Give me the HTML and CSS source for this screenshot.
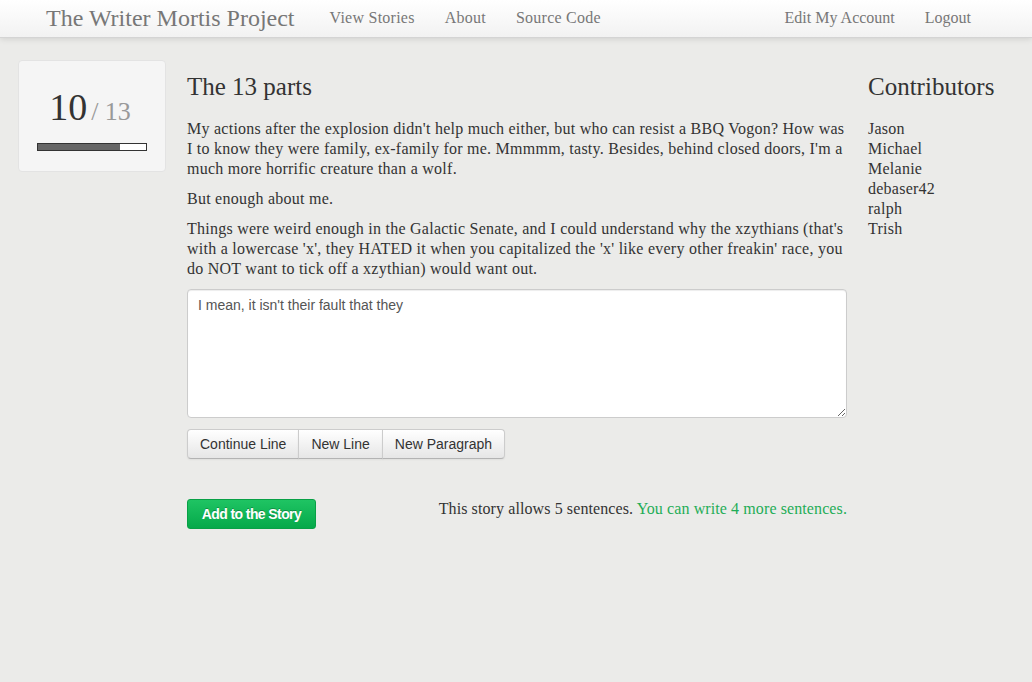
FILE: index.html
```html
<!DOCTYPE html>
<html>
<head>
<meta charset="utf-8">
<title>The Writer Mortis Project</title>
<link rel="stylesheet" href="styles.css">
</head>
<body>
<header class="navbar">
  <div class="nav-inner">
    <a class="brand" href="#">The Writer Mortis Project</a>
    <nav class="nav">
      <a href="#">View Stories</a>
      <a href="#">About</a>
      <a href="#">Source Code</a>
    </nav>
    <nav class="nav nav-right">
      <a href="#">Edit My Account</a>
      <a href="#">Logout</a>
    </nav>
  </div>
</header>
<main class="page">
  <aside class="counter">
    <div class="count"><span class="cur">10</span> <span class="total">/ 13</span></div>
    <div class="progress"><div class="bar" style="width:76%"></div></div>
  </aside>
  <section class="story">
    <h2>The 13 parts</h2>
    <p>My actions after the explosion didn't help much either, but who can resist a BBQ Vogon? How was I to know they were family, ex-family for me. Mmmmm, tasty. Besides, behind closed doors, I'm a much more horrific creature than a wolf.</p>
    <p>But enough about me.</p>
    <p>Things were weird enough in the Galactic Senate, and I could understand why the xzythians (that's with a lowercase 'x', they HATED it when you capitalized the 'x' like every other freakin' race, you do NOT want to tick off a xzythian) would want out.</p>
    <textarea class="entry">I mean, it isn't their fault that they</textarea>
    <div class="btn-group">
      <button class="btn">Continue Line</button>
      <button class="btn">New Line</button>
      <button class="btn">New Paragraph</button>
    </div>
    <div class="submit-row">
      <button class="btn-success">Add to the Story</button>
      <p class="allow">This story allows 5 sentences. <span class="ok">You can write 4 more sentences.</span></p>
    </div>
  </section>
  <aside class="contributors">
    <h2>Contributors</h2>
    <ul>
      <li>Jason</li>
      <li>Michael</li>
      <li>Melanie</li>
      <li>debaser42</li>
      <li>ralph</li>
      <li>Trish</li>
    </ul>
  </aside>
</main>
</body>
</html>
```
FILE: styles.css
```css
* { box-sizing: border-box; }
html, body { margin: 0; padding: 0; }
body {
  background: #ebebe9;
  color: #333;
  font-family: "Liberation Serif", "Times New Roman", serif;
  font-size: 16px;
  line-height: 20px;
  letter-spacing: 0.25px;
}
a { text-decoration: none; }

.navbar {
  height: 38px;
  background: linear-gradient(#ffffff, #f2f2f2);
  border-bottom: 1px solid #d4d4d4;
  box-shadow: 0 1px 6px rgba(0,0,0,0.12);
}
.nav-inner {
  width: 940px;
  margin: 0 auto;
  display: flex;
  align-items: center;
  height: 35px;
}
.brand {
  font-size: 24px;
  color: #777;
  margin-right: 20px;
  letter-spacing: 0;
}
.nav { display: flex; }
.nav a {
  color: #777;
  font-size: 16px;
  padding: 0 15px;
}
.nav-right { margin-left: auto; }
.nav-right a { letter-spacing: 0; }

.page {
  display: grid;
  grid-template-columns: 148px 660px 1fr;
  column-gap: 21px;
  padding: 22px 18px 0 18px;
}

.counter {
  background: #f5f5f5;
  border: 1px solid #e3e3e3;
  border-radius: 4px;
  height: 112px;
  padding: 26px 18px 0 18px;
  align-self: start;
}
.count {
  text-align: center;
  line-height: 40px;
  height: 56px;
  letter-spacing: 0;
  padding-right: 4px;
}
.cur { font-size: 38px; color: #333; }
.total { font-size: 26px; color: #999; }
.progress {
  height: 8px;
  border: 1px solid #333;
  background: #fff;
}
.bar { height: 100%; background: #666; }

h2 {
  font-weight: normal;
  font-size: 25px;
  line-height: 30px;
  margin: 12px 0 17px 0;
  color: #333;
  letter-spacing: 0;
}
.story p { margin: 0 0 10px 0; }

.entry {
  display: block;
  width: 100%;
  height: 129px;
  margin-top: 2px;
  padding: 5px 10px 6px;
  border: 1px solid #ccc;
  border-radius: 4px;
  background: #fff;
  box-shadow: inset 0 1px 1px rgba(0,0,0,0.075);
  font-family: "Liberation Sans", Arial, sans-serif;
  font-size: 14px;
  line-height: 20px;
  color: #555;
  letter-spacing: 0;
  resize: vertical;
}

.btn-group {
  display: flex;
  margin-top: 11px;
}
.btn {
  font-family: "Liberation Sans", Arial, sans-serif;
  font-size: 14px;
  color: #333;
  height: 30px;
  padding: 0 12px;
  letter-spacing: 0;
  background: linear-gradient(#ffffff, #e6e6e6);
  border: 1px solid #ccc;
  border-bottom-color: #b3b3b3;
  margin-left: -1px;
  box-shadow: inset 0 1px 0 rgba(255,255,255,0.2), 0 1px 2px rgba(0,0,0,0.05);
}
.btn:first-child { margin-left: 0; border-radius: 4px 0 0 4px; }
.btn:last-child { border-radius: 0 4px 4px 0; }

.submit-row {
  display: flex;
  justify-content: space-between;
  align-items: flex-start;
  margin-top: 40px;
}
.btn-success {
  font-family: "Liberation Sans", Arial, sans-serif;
  font-size: 14px;
  font-weight: bold;
  color: #fff;
  height: 30px;
  width: 129px;
  padding: 0;
  letter-spacing: -0.6px;
  background: linear-gradient(#1fc463, #05a94a);
  border: 1px solid #08a046;
  border-radius: 3px;
  text-shadow: 0 -1px 0 rgba(0,0,0,0.25);
}
.allow { margin: 0; letter-spacing: 0.1px; }
.ok { color: #1fad57; }

.contributors ul { list-style: none; margin: 0; padding: 0; }
```
